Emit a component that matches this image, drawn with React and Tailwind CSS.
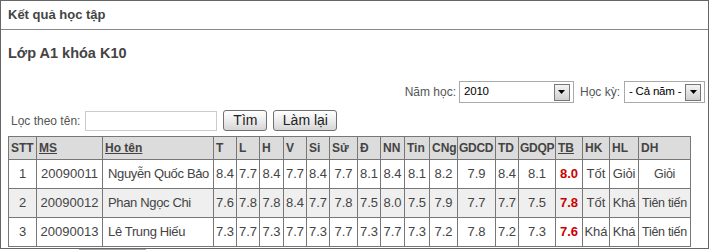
import React from 'react';

const cols = [
  { label: 'STT', w: 'w-[28px]' },
  { label: 'MS', w: 'w-[66px]', link: true },
  { label: 'Ho tên', w: 'w-[111px]', link: true },
  { label: 'T', w: 'w-[23px]' },
  { label: 'L', w: 'w-[23px]' },
  { label: 'H', w: 'w-[24px]' },
  { label: 'V', w: 'w-[23px]' },
  { label: 'Si', w: 'w-[23px]' },
  { label: 'Sử', w: 'w-[28px]' },
  { label: 'Đ', w: 'w-[23px]' },
  { label: 'NN', w: 'w-[24px]' },
  { label: 'Tin', w: 'w-[25px]' },
  { label: 'CNg', w: 'w-[28px]' },
  { label: 'GDCD', w: 'w-[38px]', tight: true },
  { label: 'TD', w: 'w-[23px]' },
  { label: 'GDQP', w: 'w-[37px]', tight: true },
  { label: 'TB', w: 'w-[27px]', link: true },
  { label: 'HK', w: 'w-[27px]' },
  { label: 'HL', w: 'w-[29px]' },
  { label: 'DH', w: 'w-[52px]' },
];

const rows = [
  { stt: 1, ms: '20090011', name: 'Nguyễn Quốc Bảo', scores: ['8.4', '7.7', '8.4', '7.7', '8.4', '7.7', '8.1', '8.4', '8.1', '8.2', '7.9', '8.4', '8.1'], tb: '8.0', hk: 'Tốt', hl: 'Giỏi', dh: 'Giỏi' },
  { stt: 2, ms: '20090012', name: 'Phan Ngọc Chi', scores: ['7.6', '7.8', '7.8', '8.4', '7.7', '7.8', '7.5', '8.0', '7.5', '7.9', '7.7', '7.7', '7.5'], tb: '7.8', hk: 'Tốt', hl: 'Khá', dh: 'Tiên tiến' },
  { stt: 3, ms: '20090013', name: 'Lê Trung Hiếu', scores: ['7.3', '7.7', '7.3', '7.7', '7.3', '7.7', '7.3', '7.7', '7.3', '7.2', '7.8', '7.2', '7.3'], tb: '7.6', hk: 'Khá', hl: 'Khá', dh: 'Tiên tiến' },
];

// nút mũi tên của ô chọn kiểu cũ
function DropBtn() {
  return (
    <span className="flex items-center justify-center w-[16px] h-[17px] border border-[#777] bg-gradient-to-b from-[#f4f4f4] to-[#cfcfcf]">
      <svg width="7" height="4" viewBox="0 0 7 4"><path d="M0 0h7L3.5 4z" fill="#000" /></svg>
    </span>
  );
}

function Select({ value, className }) {
  return (
    <div className={`flex items-center justify-between h-[22px] border border-[#a9a9a9] bg-white pl-[4px] pr-[3px] ${className}`}>
      <span className="text-[11.5px] text-black tracking-[-0.2px]">{value}</span>
      <DropBtn />
    </div>
  );
}

function Btn({ children, className }) {
  return (
    <button className={`h-[21px] border border-[#707070] rounded-[3px] bg-gradient-to-b from-white via-[#ececec] to-[#d6d6d6] text-[14px] leading-[19px] text-[#222] ${className}`}>
      {children}
    </button>
  );
}

export default function App() {
  const td = 'border border-[#777] h-[29px] text-center text-[13px] px-0 whitespace-nowrap';
  return (
    <div className="font-['Liberation_Sans',Arial,sans-serif] text-[#444] bg-white w-[711px] h-[250px] overflow-hidden">
      <div className="w-[709px] h-[249px] border border-[#666] overflow-hidden">
        {/* tiêu đề */}
        <div className="h-[29px] border-b border-[#888] pl-[7px] flex items-center text-[13px] font-bold">
          Kết quả học tập
        </div>

        <div className="mt-[15px] pl-[7px] text-[14.5px] leading-[17px] font-bold">Lớp A1 khóa K10</div>

        {/* bộ lọc năm học */}
        <div className="mt-[19px] flex items-center justify-end pr-[3px] text-[12px] text-[#555]">
          <span>Năm học:</span>
          <Select value="2010" className="w-[115px] ml-[3px]" />
          <span className="ml-[6px]">Học kỳ:</span>
          <Select value="- Cả năm -" className="w-[81px] ml-[4px]" />
        </div>

        <div className="mt-[7px] flex items-center pl-[10px] text-[12px] text-[#555]">
          <span>Lọc theo tên:</span>
          <input className="ml-[5px] w-[132px] h-[20px] border border-[#ccc] outline-none" />
          <Btn className="ml-[6px] w-[44px]">Tìm</Btn>
          <Btn className="ml-[6px] w-[64px]">Làm lại</Btn>
        </div>

        <table className="mt-[5px] ml-[7px] table-fixed border-collapse w-[683px]">
          <colgroup>
            {cols.map(c => <col key={c.label} className={c.w} />)}
          </colgroup>
          <thead>
            <tr className="bg-[#dcdcdc]">
              {cols.map(c => (
                <th
                  key={c.label}
                  className={`border border-[#777] h-[23px] text-left text-[12px] font-bold whitespace-nowrap ${c.tight ? 'pl-[1px] pr-0 tracking-[-0.3px]' : 'pl-[2px] pr-0'}`}
                >
                  {c.link ? <span className="underline">{c.label}</span> : c.label}
                </th>
              ))}
            </tr>
          </thead>
          <tbody>
            {rows.map((r, i) => (
              <tr key={r.ms} className={i === 1 ? 'bg-[#efefef]' : 'bg-white'}>
                <td className={td}>{r.stt}</td>
                <td className={td}>{r.ms}</td>
                <td className="border border-[#777] h-[29px] text-left text-[13px] pl-[5px] pr-0 whitespace-nowrap tracking-[-0.35px]">{r.name}</td>
                {r.scores.map((s, j) => <td key={j} className={td}>{s}</td>)}
                <td className={`${td} font-bold text-[#cc0000]`}>{r.tb}</td>
                <td className={td}>{r.hk}</td>
                <td className={`${td} tracking-[-0.2px]`}>{r.hl}</td>
                <td className="border border-[#777] h-[29px] text-center text-[12.5px] px-0 whitespace-nowrap tracking-[-0.3px]">{r.dh}</td>
              </tr>
            ))}
          </tbody>
        </table>
      </div>
      <div className="ml-[79px] w-[67px] h-[4px] border border-b-0 border-[#aaa] bg-[#f2f2f2]" />
    </div>
  );
}
